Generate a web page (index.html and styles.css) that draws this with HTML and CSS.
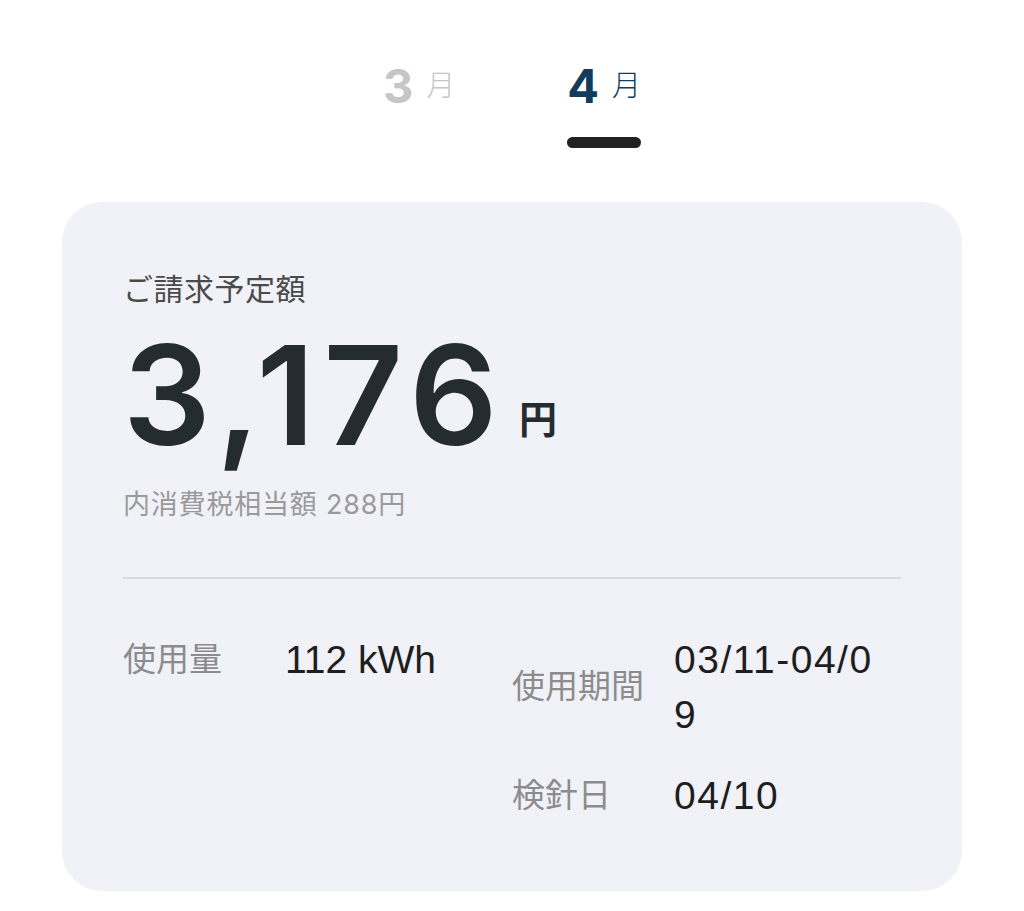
FILE: index.html
```html
<!DOCTYPE html>
<html lang="ja">
<head>
<meta charset="utf-8">
<title>ご請求予定額</title>
<link rel="stylesheet" href="styles.css">
</head>
<body>
  <nav class="tabs">
    <div class="tab">
      <div class="tab-label"><span class="tab-num">3</span><span class="tab-unit">月</span></div>
    </div>
    <div class="tab tab-active">
      <div class="tab-label"><span class="tab-num">4</span><span class="tab-unit">月</span></div>
      <div class="tab-bar"></div>
    </div>
  </nav>

  <section class="card">
    <p class="title">ご請求予定額</p>
    <p class="amount"><span class="amount-num">3,176</span><span class="amount-unit">円</span></p>
    <p class="tax">内消費税相当額 288円</p>
    <hr class="divider">
    <div class="details">
      <div class="pair">
        <span class="label">使用量</span>
        <span class="value value-usage">112 kWh</span>
      </div>
      <div class="list">
        <div class="pair pair-right">
          <span class="label">使用期間</span>
          <span class="value value-wrap">03/11-04/09</span>
        </div>
        <div class="pair pair-right">
          <span class="label">検針日</span>
          <span class="value">04/10</span>
        </div>
      </div>
    </div>
  </section>
</body>
</html>
```

FILE: styles.css
```css
* { box-sizing: border-box; }

body {
  margin: 0;
  background: #ffffff;
  font-family: Inter, "Noto Sans CJK JP", sans-serif;
  color: #222;
}

p { margin: 0; }

.tabs {
  display: flex;
  justify-content: center;
  align-items: flex-start;
  gap: 112px;
  padding-top: 62px;
}

.tab {
  display: flex;
  flex-direction: column;
  align-items: stretch;
}

.tab-label {
  display: flex;
  align-items: center;
  gap: 13px;
  height: 47px;
  color: #c6c6c8;
}

.tab-active .tab-label { color: #123c5c; }

.tab-num {
  font-size: 47px;
  line-height: 1;
  font-weight: 700;
}

.tab-unit {
  font-size: 29px;
  line-height: 1;
  font-weight: 300;
}

.tab-bar {
  margin-top: 28px;
  height: 11px;
  border-radius: 6px;
  background: #222222;
}

.card {
  margin: 54px 62px 0;
  background: #f1f2f7;
  border-radius: 40px;
  padding: 67px 61px 68px;
}

.title {
  font-size: 30px;
  line-height: 1.35;
  color: #4a4a4a;
  letter-spacing: 0.5px;
}

.amount {
  margin-top: 16px;
  display: flex;
  align-items: baseline;
  color: #252c2f;
}

.amount-num {
  font-size: 138px;
  line-height: 1;
  font-weight: 600;
  letter-spacing: 8.5px;
}

.amount-unit {
  margin-left: 13px;
  font-size: 38px;
  font-weight: 600;
  position: relative;
  top: -12px;
}

.tax {
  margin-top: 23px;
  font-size: 27px;
  line-height: 1.3;
  color: #9a9a9c;
  letter-spacing: 0.8px;
}

.divider {
  margin: 55px 0 0;
  border: 0;
  height: 2px;
  background: #d9dadf;
}

.details {
  margin-top: 53px;
  display: grid;
  grid-template-columns: 1fr 1fr;
}

.pair {
  display: grid;
  grid-template-columns: 162px 1fr;
  align-items: start;
}

.pair-right {
  grid-template-columns: 162px 212px;
  align-items: center;
}

.list {
  display: flex;
  flex-direction: column;
  gap: 26px;
}

.label {
  font-size: 33px;
  line-height: 55px;
  color: #8c8c8e;
}

.value {
  font-family: "Liberation Sans", Arial, sans-serif;
  font-size: 39px;
  line-height: 55px;
  color: #1e1e1e;
  letter-spacing: 1.5px;
}

.value-usage {
  letter-spacing: 0;
}

.value-wrap {
  word-break: break-all;
}
```
